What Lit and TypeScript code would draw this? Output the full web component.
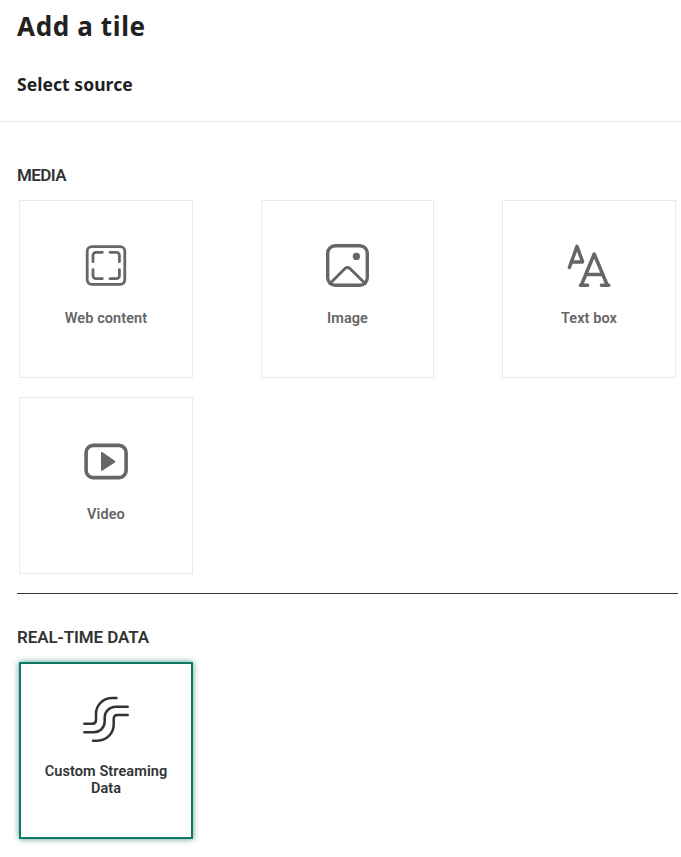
import { LitElement, html, css, svg } from "lit";
import { customElement, property } from "lit/decorators.js";
import { classMap } from "lit/directives/class-map.js";

const icons = {
  web: svg`<g stroke-width="2.8"><rect x="5.2" y="4.7" width="37.6" height="37.6" rx="4.5"/>
    <path d="M11 19.7V13.3a3 3 0 0 1 3-3h6.3M28 10.3h6.4a3 3 0 0 1 3 3v6.4M37.4 27.6v6.1a3 3 0 0 1-3 3H28M20.3 36.7H14a3 3 0 0 1-3-3v-6.1"/></g>`,
  image: svg`<g stroke-width="3.4"><rect x="3.7" y="3.7" width="39.6" height="39.6" rx="7.5"/>
    <path stroke-width="3" d="M6 41.5L21.3 26.3a3 3 0 0 1 4.3 0L41.2 41.5"/></g>
    <circle cx="32.4" cy="14.4" r="3.6" class="solid"/>`,
  text: svg`<g stroke-width="3.5"><path d="M4.4 25.4L12 4.4L17.6 19.8M6.8 20H17.4"/>
    <path d="M16.4 43L29.2 12L42.2 43M20.5 32.4H38"/>
    <path d="M15.4 43.2h7.2M36.4 43.2h7.4"/></g>`,
  video: svg`<rect x="4.1" y="7.4" width="40" height="32.2" rx="7" stroke-width="3.6"/>
    <path class="solid" d="M19 15.2c0-1 .8-1.4 1.6-.9l12.2 8.4c.7.5.7 1.2 0 1.7l-12.2 8.2c-.8.5-1.6.1-1.6-.9z"/>`,
  stream: svg`<g stroke-width="2.5"><path d="M34.5 3H30A16 16 0 0 0 14 19V25Q14 28.7 10.3 28.7H2.3"/>
    <path d="M45.7 11.7H33.5A10.8 10.8 0 0 0 22.7 22.5V26.5A10.8 10.8 0 0 1 11.9 37.3H2.3"/>
    <path d="M45.7 20.1H35.5Q31.7 20.1 31.7 24V29.5A16.2 16.2 0 0 1 15.5 45.7H11"/></g>`,
};

@customElement("source-tile")
class SourceTile extends LitElement {
  @property() icon: keyof typeof icons = "web";
  @property() label = "";
  @property({ type: Boolean }) selected = false;

  static styles = css`
    :host { display: block; }
    .tile {
      box-sizing: border-box;
      height: 100%;
      padding-bottom: 50px;
      border: 1px solid #eaeaea;
      display: flex;
      flex-direction: column;
      justify-content: flex-end;
      align-items: center;
      color: #666;
      background: #fff;
      font: 600 14.5px/17px Roboto, sans-serif;
      letter-spacing: 0.08px;
      text-align: center;
    }
    .selected {
      padding-bottom: 40px;
      border: 2px solid #117865;
      box-shadow: 0 0 6px rgba(17, 120, 101, 0.75);
      color: #333;
    }
    svg {
      width: 48px;
      height: 48px;
      flex: none;
      fill: none;
      stroke: currentColor;
      stroke-linecap: round;
      stroke-linejoin: round;
    }
    .solid { fill: currentColor; stroke: none; }
    .label { width: 140px; margin-top: 20px; }
  `;

  render() {
    return html`<div class=${classMap({ tile: true, selected: this.selected })}>
      <svg viewBox="0 0 48 48" aria-hidden="true">${icons[this.icon]}</svg>
      <div class="label">${this.label}</div>
    </div>`;
  }
}

@customElement("app-root")
class AppRoot extends LitElement {
  static styles = css`
    :host {
      display: block;
      height: 857px;
      overflow: hidden;
      background: #fff;
      color: #212121;
      font-family: "Noto Sans", sans-serif;
    }
    .header {
      box-sizing: border-box;
      height: 122px;
      padding: 8px 17px 0;
      border-bottom: 1px solid #eaeaea;
    }
    h1 { margin: 0; font-size: 26px; line-height: 36px; font-weight: 700; letter-spacing: 0.65px; }
    h2 { margin: 27px 0 0; font-size: 17.5px; line-height: 26px; font-weight: 700; letter-spacing: 0.06px; }
    .body { padding: 43px 3px 0 17px; }
    h3 {
      margin: 0;
      font: 600 17px/20px Roboto, sans-serif;
      letter-spacing: -0.1px;
      color: #333;
    }
    .media { letter-spacing: -0.6px; }
    .grid {
      display: grid;
      grid-template-columns: 174px 173px 174px;
      justify-content: space-between;
      row-gap: 19px;
      margin: 15px 2px 0;
    }
    .media-grid { grid-template-rows: 178px 177px; }
    .data-grid { grid-template-rows: 177px; }
    .divider { height: 1px; margin: 19px 0 33px; background: #333; }
  `;

  render() {
    return html`
      <div class="header"><h1>Add a tile</h1><h2>Select source</h2></div>
      <div class="body">
        <h3 class="media">MEDIA</h3>
        <div class="grid media-grid">
          <source-tile icon="web" label="Web content"></source-tile>
          <source-tile icon="image" label="Image"></source-tile>
          <source-tile icon="text" label="Text box"></source-tile>
          <source-tile icon="video" label="Video"></source-tile>
        </div>
        <div class="divider"></div>
        <h3>REAL-TIME DATA</h3>
        <div class="grid data-grid">
          <source-tile icon="stream" label="Custom Streaming Data" selected></source-tile>
        </div>
      </div>
    `;
  }
}
